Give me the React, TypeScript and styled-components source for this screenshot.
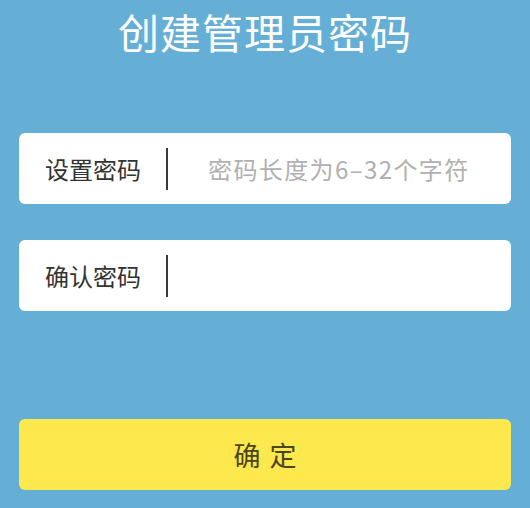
import styled, { createGlobalStyle } from 'styled-components';

const GlobalStyle = createGlobalStyle`
  html, body {
    margin: 0;
    padding: 0;
    background: #65afd7;
  }
  body {
    font-family: "Noto Sans CJK SC", "Noto Sans", sans-serif;
  }
`;

const Page = styled.div`
  width: 530px;
  height: 508px;
  display: flex;
  flex-direction: column;
  background: #65afd7;
  overflow: hidden;
`;

const Title = styled.h1`
  margin: 0;
  height: 62px;
  line-height: 62px;
  text-align: center;
  color: #ffffff;
  font-size: 41px;
  font-weight: 400;
  letter-spacing: 1px;
`;

const Form = styled.div`
  display: flex;
  flex-direction: column;
  gap: 36px;
  margin: 71px 19px 0;
`;

const Field = styled.label`
  height: 71px;
  display: flex;
  align-items: center;
  background: #ffffff;
  border-radius: 6px;
  padding-left: 26px;
`;

const FieldLabel = styled.span`
  width: 96px;
  font-size: 24px;
  color: #333333;
  white-space: nowrap;
`;

const Divider = styled.span`
  width: 2px;
  height: 42px;
  margin: 0 40px 0 25px;
  background: #3a3a3a;
`;

const Input = styled.input`
  flex: 1;
  min-width: 0;
  border: none;
  outline: none;
  background: transparent;
  padding: 0;
  font-family: inherit;
  font-size: 24px;
  letter-spacing: 1.4px;
  color: #333;
  &::placeholder {
    color: #b0b0b0;
  }
`;

const Submit = styled.button`
  margin: 108px 19px 0;
  height: 71px;
  border: none;
  border-radius: 6px;
  background: #fde94d;
  color: #4b4520;
  font-family: inherit;
  font-size: 27px;
  letter-spacing: 9px;
  text-indent: 9px;
  cursor: pointer;
`;

export default function App() {
  return (
    <Page>
      <GlobalStyle />
      <Title>创建管理员密码</Title>
      <Form>
        <Field>
          <FieldLabel>设置密码</FieldLabel>
          <Divider />
          <Input type="password" placeholder="密码长度为6–32个字符" />
        </Field>
        <Field>
          <FieldLabel>确认密码</FieldLabel>
          <Divider />
          <Input type="password" />
        </Field>
      </Form>
      <Submit>确定</Submit>
    </Page>
  );
}
